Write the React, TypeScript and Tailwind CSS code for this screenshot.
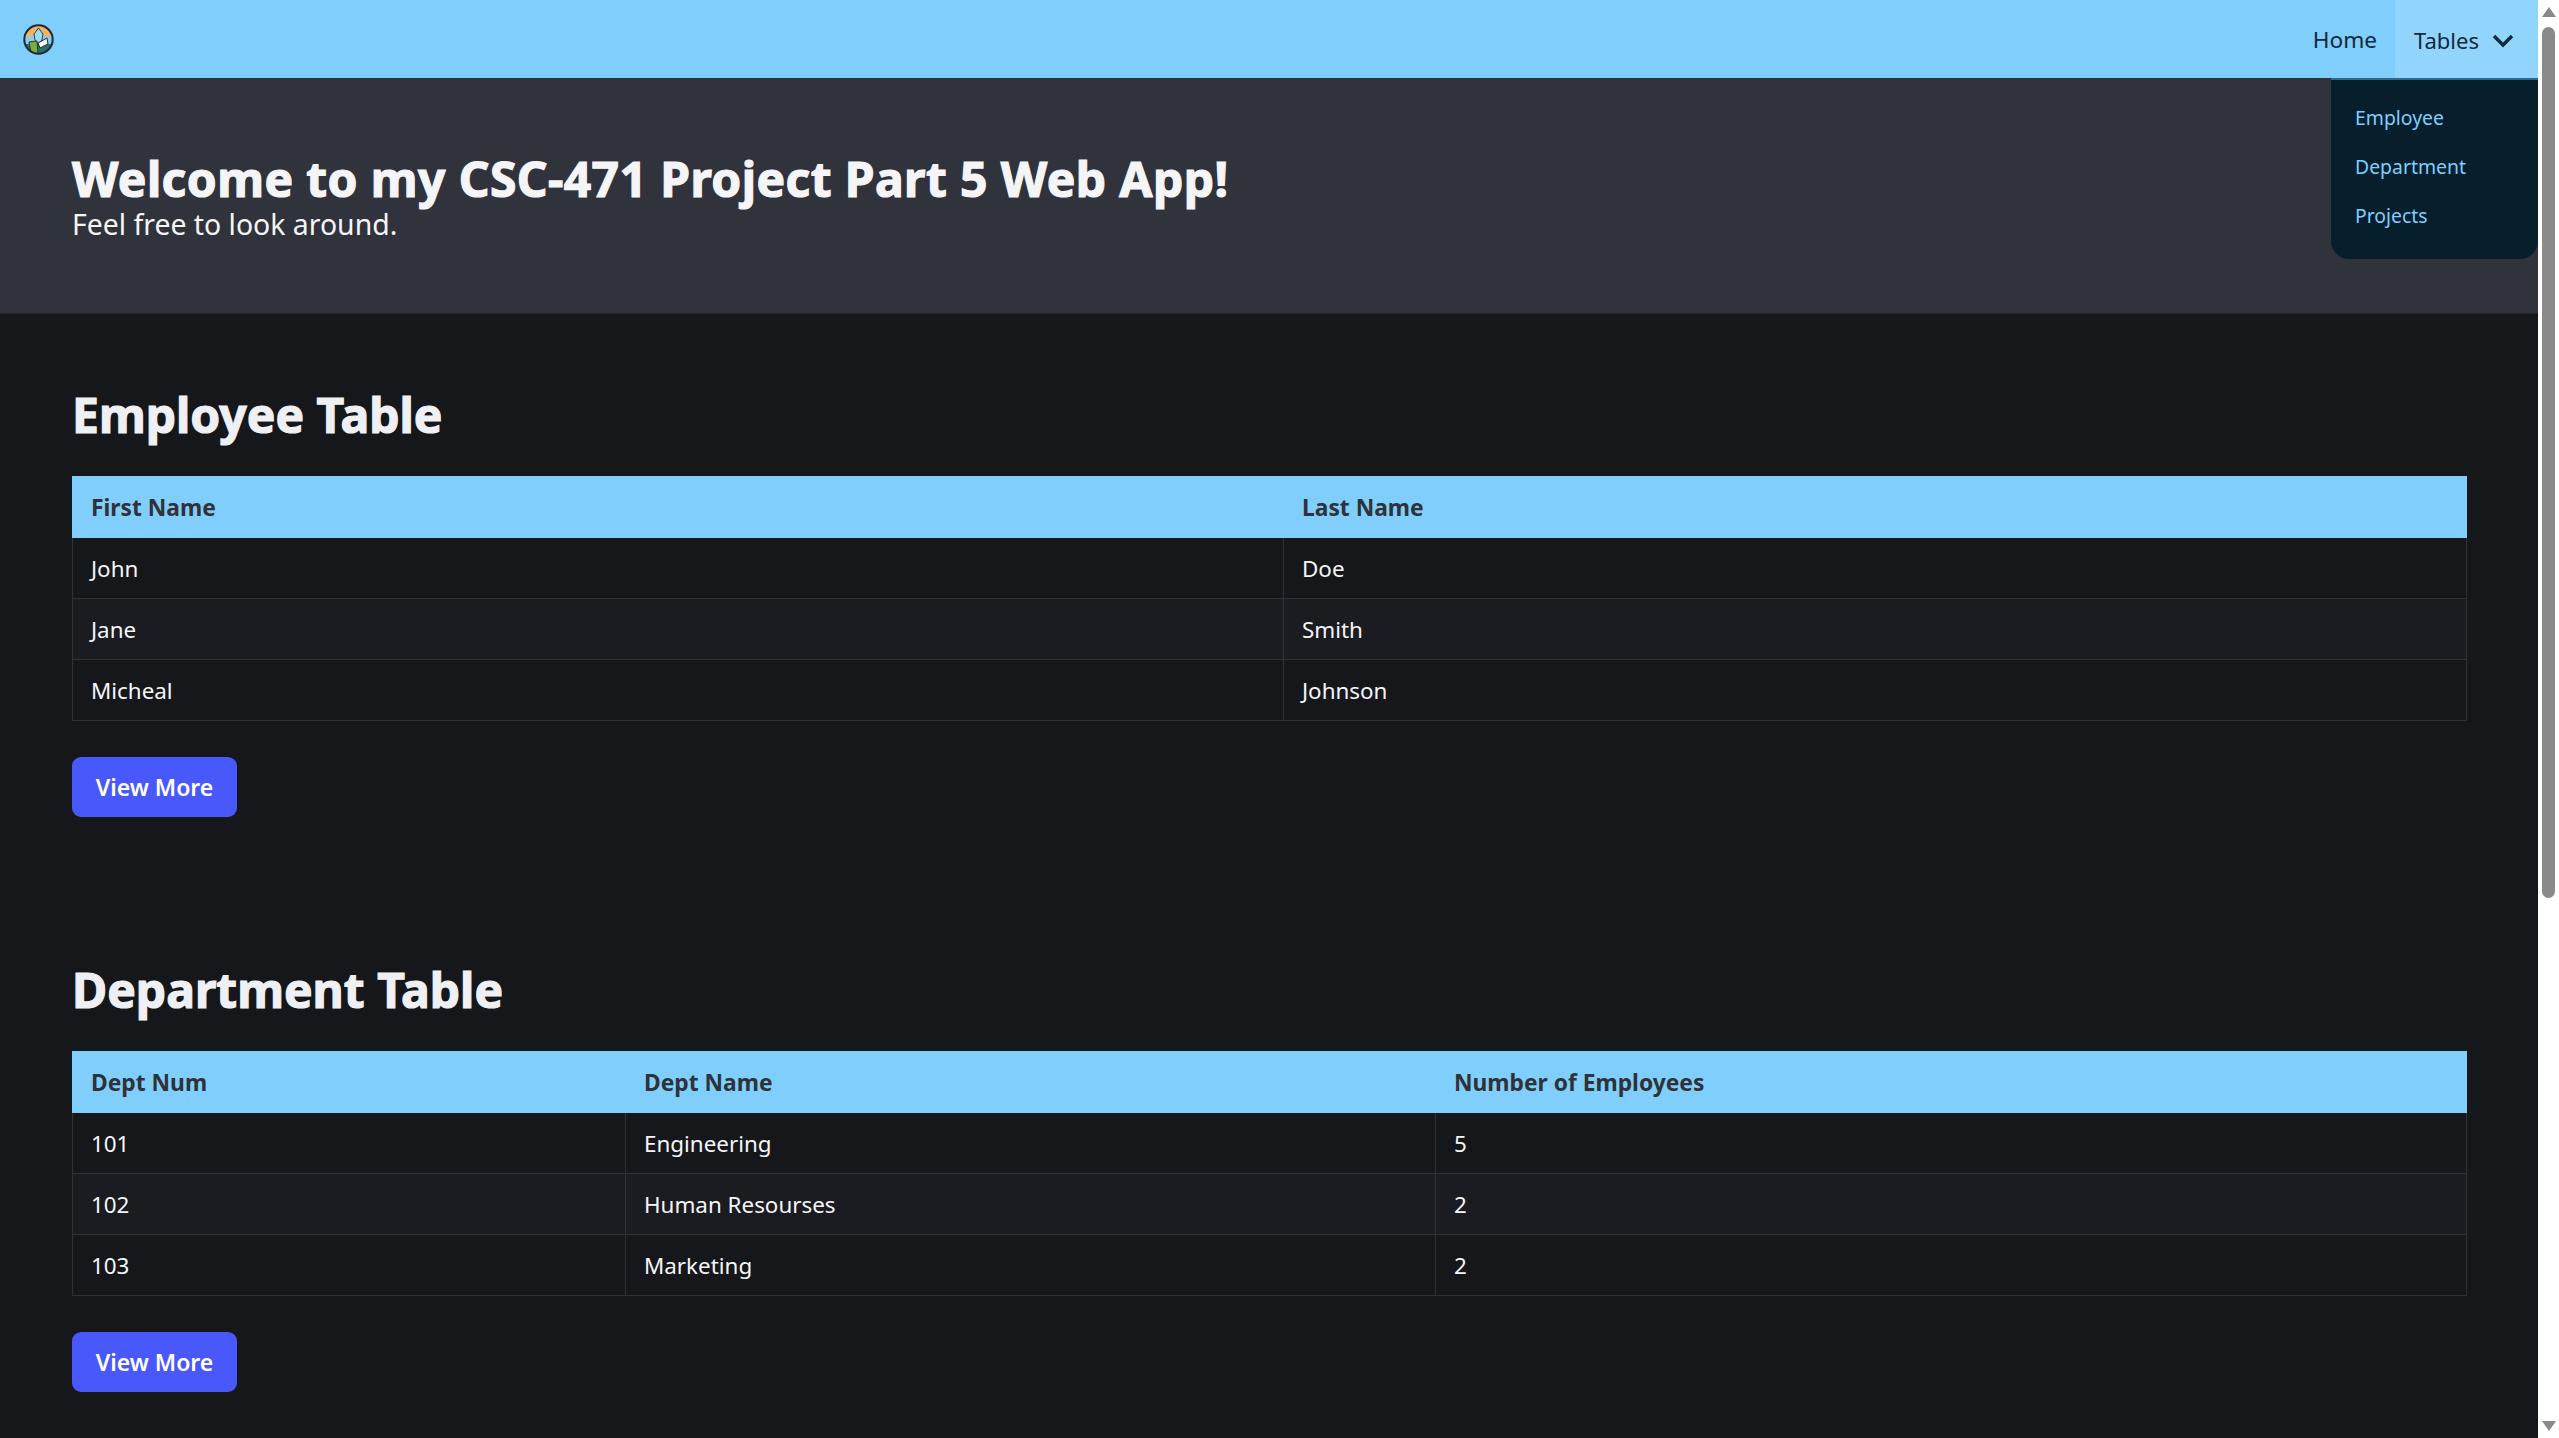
const employees = [
  ["John", "Doe"],
  ["Jane", "Smith"],
  ["Micheal", "Johnson"],
];

const departments = [
  ["101", "Engineering", "5"],
  ["102", "Human Resourses", "2"],
  ["103", "Marketing", "2"],
];

function Logo() {
  return (
    <svg width="31" height="31" viewBox="0 0 31 31">
      <defs>
        <clipPath id="logoClip">
          <circle cx="15.5" cy="15.5" r="14" />
        </clipPath>
      </defs>
      <g clipPath="url(#logoClip)">
        <rect width="31" height="14" fill="#f4b267" />
        <rect y="12" width="31" height="10" fill="#8ccdea" />
        <rect y="20" width="31" height="11" fill="#2f6f6a" />
        <path d="M15.5 4 L20 10 L19 16 L15.5 21 L12 16 L11 10 Z" fill="#9fd8ef" stroke="#174a63" strokeWidth="1" />
        <path d="M6 18 L14 17 L15 30 L8 28 Z" fill="#7fae3e" stroke="#1f3d22" strokeWidth="1" />
        <path d="M15 19 L24 14 L25 20 L17 24 Z" fill="#f4f7f8" stroke="#1c2b33" strokeWidth="1" />
      </g>
      <circle cx="15.5" cy="15.5" r="14.2" fill="none" stroke="#1a2a36" strokeWidth="2" />
    </svg>
  );
}

function DataTable({ headers, rows, widths }: { headers: string[]; rows: string[][]; widths: string[] }) {
  return (
    <table className="w-full table-fixed border-collapse text-[22.4px] leading-[36px]">
      <colgroup>
        {widths.map((w) => (
          <col key={w} className={w} />
        ))}
      </colgroup>
      <thead>
        <tr className="bg-[#7fcefb] text-[#2f3238]">
          {headers.map((h) => (
            <th key={h} className="h-[61px] border border-[#7fcefb] px-[18px] pt-[2px] text-left text-[22.8px] font-bold">
              {h}
            </th>
          ))}
        </tr>
      </thead>
      <tbody>
        {rows.map((row, i) => (
          <tr key={i} className={i % 2 === 1 ? "bg-[#1b1c21]" : "bg-[#16171b]"}>
            {row.map((cell, j) => (
              <td key={j} className="h-[61px] border border-[#2f323b] px-[18px] pt-[2px] text-[#f5f5f7]">
                {cell}
              </td>
            ))}
          </tr>
        ))}
      </tbody>
    </table>
  );
}

function Section({ title, children }: { title: string; children: React.ReactNode }) {
  return (
    <section className="pr-[73px] pb-[137px] pl-[72px]">
      <h2 className="mb-[25px] text-[48px] leading-[72px] font-bold text-[#eff0f3] [-webkit-text-stroke:1.2px_#eff0f3]">{title}</h2>
      {children}
      <button className="mt-[36px] h-[60px] w-[165px] rounded-[9px] bg-[#4858fa] pt-[1px] text-[23px] font-semibold text-white">
        View More
      </button>
    </section>
  );
}

export default function App() {
  return (
    <div className="flex h-screen overflow-hidden bg-white font-['Noto_Sans','Open_Sans',sans-serif]">
      <main className="min-w-0 flex-1 overflow-hidden bg-[#16171b]">
        <nav className="relative flex h-[78px] items-center justify-between bg-[#7fcefb] pl-[23px] text-[22.6px] text-[#10293b]">
          <Logo />
          <div className="flex h-full items-center">
            <a className="px-[18px] pt-[2px]">Home</a>
            <div className="relative flex h-full w-[143px] items-center gap-[12px] bg-[#91d5fc] pl-[19px]">
              <span className="pt-[2px] text-[22px]">Tables</span>
              <svg className="mt-[4px]" width="24" height="16" viewBox="0 0 24 16" fill="none" stroke="#10293b" strokeWidth="3.4">
                <path d="M3 3 L12 12 L21 3" />
              </svg>
              <div className="absolute top-[78px] right-0 z-10 flex h-[181px] w-[207px] flex-col gap-[13px] rounded-b-[18px] border-t-2 border-[#2a6a92] bg-[#071e2d] pt-[20px] pl-[24px] text-[19.4px] leading-[36px] text-[#7fcefb]">
                <a>Employee</a>
                <a>Department</a>
                <a>Projects</a>
              </div>
            </div>
          </div>
        </nav>

        <header className="flex h-[236px] flex-col justify-center border-b border-[#24262d] bg-[#30333c] px-[72px] pt-[2px]">
          <h1 className="text-[48px] leading-[54px] font-bold tracking-[0.4px] text-[#f5f5f7] [-webkit-text-stroke:1.2px_#f5f5f7]">
            Welcome to my CSC-471 Project Part 5 Web App!
          </h1>
          <p className="text-[28.4px] leading-[36px] text-[#f5f5f7]">Feel free to look around.</p>
        </header>

        <div className="pt-[65px]">
          <Section title="Employee Table">
            <DataTable
              headers={["First Name", "Last Name"]}
              rows={employees}
              widths={["w-[1211px]", "w-[1183px]"]}
            />
          </Section>
          <Section title="Department Table">
            <DataTable
              headers={["Dept Num", "Dept Name", "Number of Employees"]}
              rows={departments}
              widths={["w-[553px]", "w-[810px]", "w-[1031px]"]}
            />
          </Section>
        </div>
      </main>

      <aside className="flex w-[21px] shrink-0 flex-col items-center bg-white pt-[7px]">
        <div className="h-0 w-0 border-x-[7px] border-b-[10px] border-x-transparent border-b-[#8a8a8a]" />
        <div className="mt-[10px] h-[871px] w-[13px] rounded-full bg-[#8a8a8a]" />
        <div className="mt-auto mb-[7px] h-0 w-0 border-x-[7px] border-t-[10px] border-x-transparent border-t-[#8a8a8a]" />
      </aside>
    </div>
  );
}
